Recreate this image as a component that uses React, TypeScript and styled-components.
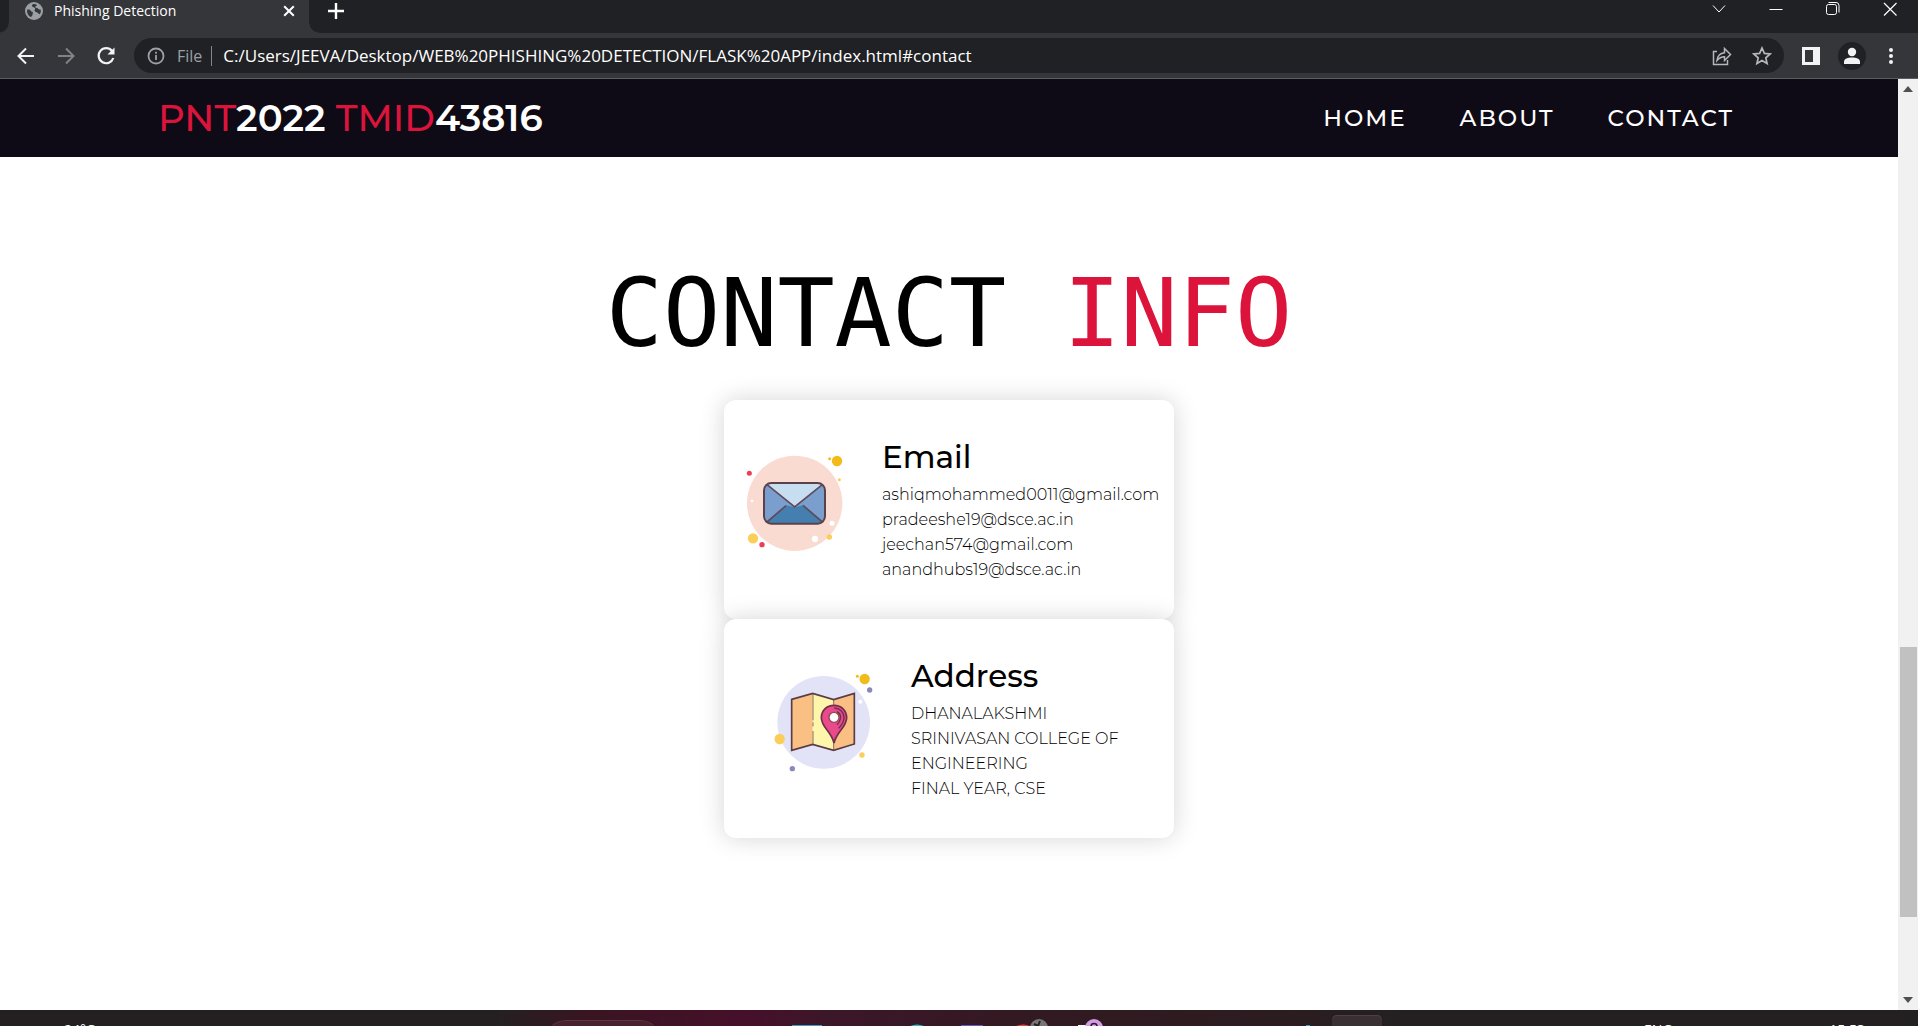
import React from "react";
import styled, { createGlobalStyle } from "styled-components";

const crimson = "#dc143c";
const uiFont = `"Segoe UI", "Open Sans", "Noto Sans", sans-serif`;
const siteFont = `Montserrat, Inter, "Open Sans", sans-serif`;

const GlobalStyle = createGlobalStyle`
  *, *::before, *::after { box-sizing: border-box; }
  body { margin: 0; background: #fff; overflow: hidden; }
  h1, h2, p, ul, address { margin: 0; padding: 0; }
`;

const Screen = styled.div`
  display: flex;
  flex-direction: column;
  height: 100vh;
  overflow: hidden;
  font-family: ${uiFont};
`;

/* Browser frame */
const TabStrip = styled.div`
  flex: none;
  display: flex;
  align-items: stretch;
  height: 33px;
  padding-left: 9px;
  background: #202124;
  color: #fff;
`;

const Tab = styled.div`
  position: relative;
  display: flex;
  align-items: center;
  gap: 11px;
  width: 300px;
  padding: 0 12px 12px 16px;
  background: #35363a;
  font-size: 14px;
  line-height: 20px;
  &::before,
  &::after {
    content: "";
    position: absolute;
    bottom: 0;
    width: 10px;
    height: 10px;
  }
  &::before {
    left: -10px;
    background: radial-gradient(circle at 0 0, #202124 9px, #35363a 10px);
  }
  &::after {
    right: -10px;
    background: radial-gradient(circle at 100% 0, #202124 9px, #35363a 10px);
  }
`;

const TabTitle = styled.span`
  flex: 1;
  white-space: nowrap;
`;

const IconButton = styled.button<{ $w?: number; $round?: boolean }>`
  flex: none;
  display: flex;
  align-items: center;
  justify-content: center;
  width: ${(p) => p.$w ?? 40}px;
  height: ${(p) => (p.$round ? "28px" : "22px")};
  margin-left: ${(p) => (p.$round ? "13px" : "0")};
  padding: 0;
  border: 0;
  border-radius: ${(p) => (p.$round ? "50%" : "0")};
  background: ${(p) => (p.$round ? "#202124" : "transparent")};
  color: inherit;
  svg {
    display: block;
  }
`;

const WindowControls = styled.div`
  display: flex;
  margin-left: auto;
  height: 17px;
  align-items: center;
`;

const Toolbar = styled.div`
  flex: none;
  display: flex;
  align-items: center;
  height: 46px;
  padding: 0 2px 0 6px;
  background: #35363a;
  border-bottom: 1px solid #5c5d60;
  color: #f1f3f4;
`;

const Omnibox = styled.div`
  flex: 1;
  display: flex;
  align-items: center;
  height: 35px;
  margin: 0 13px 0 8px;
  padding: 0 2px 0 13px;
  border-radius: 18px;
  background: #202124;
  color: #b4b8bc;
  font-size: 16px;
`;

const Scheme = styled.span`
  margin-left: 12px;
  padding-right: 9px;
  border-right: 1px solid #80868b;
  line-height: 20px;
  color: #9aa0a6;
`;

const Url = styled.input`
  flex: 1;
  min-width: 0;
  margin-left: 11px;
  padding: 0;
  border: 0;
  outline: 0;
  background: transparent;
  color: #fff;
  font: 17px/22px ${uiFont};
`;

/* Viewport of the page */
const Viewport = styled.div`
  flex: 1;
  min-height: 0;
  display: flex;
`;

const Page = styled.div`
  flex: 1;
  min-width: 0;
  overflow: hidden;
  background: #fff;
  color: #000;
  font-family: ${siteFont};
`;

const Header = styled.header`
  display: flex;
  align-items: center;
  justify-content: space-between;
  height: 78px;
  padding: 0 164px 0 158px;
  background: #0f0b16;
`;

const Brand = styled.a`
  color: #fff;
  font-size: 37px;
  font-weight: 600;
  line-height: 48px;
  text-decoration: none;
  white-space: nowrap;
`;

const Accent = styled.span<{ $weight?: number }>`
  color: ${crimson};
  font-weight: ${(p) => p.$weight ?? 400};
`;

const Nav = styled.nav`
  display: flex;
  gap: 53px;
`;

const NavLink = styled.a`
  color: #fff;
  font-size: 23px;
  font-weight: 500;
  line-height: 32px;
  letter-spacing: 2px;
  text-transform: uppercase;
  text-decoration: none;
`;

const Contact = styled.section`
  display: flex;
  flex-direction: column;
  align-items: center;
  padding-top: 100px;
`;

const Title = styled.h1`
  margin-bottom: 31px;
  font-family: "DejaVu Sans Mono", monospace;
  font-size: 95px;
  font-weight: 400;
  line-height: 112px;
  text-transform: uppercase;
  white-space: nowrap;
`;

const Card = styled.article<{ $indent: number }>`
  display: flex;
  align-items: center;
  width: 450px;
  padding: 38px 0 37px ${(p) => p.$indent}px;
  border-radius: 12px;
  background: #fff;
  box-shadow: 0 0 24px rgba(0, 0, 0, 0.17);
`;

const Picture = styled.div`
  flex: none;
  margin-right: 37px;
  padding-bottom: 14px;
  svg {
    display: block;
  }
`;

const CardTitle = styled.h2`
  margin-bottom: 6px;
  font-size: 31px;
  font-weight: 500;
  line-height: 38px;
`;

const Lines = styled.ul`
  list-style: none;
  font-size: 16px;
  font-weight: 300;
  line-height: 25px;
  white-space: nowrap;
`;

/* Scroll bar */
const ScrollBar = styled.div`
  flex: none;
  display: flex;
  flex-direction: column;
  width: 20px;
  background: #f1f1f1;
`;

const ScrollArrow = styled.button`
  display: flex;
  align-items: center;
  justify-content: center;
  height: 20px;
  padding: 0;
  border: 0;
  background: transparent;
`;

const ScrollTrack = styled.div`
  flex: 1;
  display: grid;
  grid-template-rows: 548fr 270fr 73fr;
  padding: 0 1px 0 2px;
`;

const ScrollThumb = styled.div`
  grid-row: 2;
  background: #c1c1c1;
`;

/* Task bar */
const TaskBar = styled.footer`
  flex: none;
  display: grid;
  grid-template-columns: 546fr 838px 534fr;
  height: 16px;
  overflow: hidden;
  background: linear-gradient(90deg, #242021 0%, #242021 26%, #3a1421 31%, #46102a 39%, #3c1629 43%, #311a21 55%, #2b1c20 67%, #242021 73%);
  color: #fff;
  font-size: 14px;
  line-height: 20px;
`;

const Weather = styled.div`
  padding: 10px 0 0 64px;
`;

const Tasks = styled.div`
  display: flex;
`;

const SearchPill = styled.div`
  flex: none;
  width: 114px;
  height: 40px;
  margin: 10px 119px 0 0;
  border-radius: 20px;
  border-top: 1px solid #5d3441;
  background: #48212e;
`;

const Slot = styled.div<{ $active?: boolean }>`
  flex: none;
  width: ${(p) => (p.$active ? 50 : 55)}px;
  height: 48px;
  margin: ${(p) => (p.$active ? "5px 0 0 3px" : "0")};
  padding-top: ${(p) => (p.$active ? "9px" : "0")};
  border-radius: 5px;
  background: ${(p) => (p.$active ? "#3a3033" : "transparent")};
  box-shadow: ${(p) => (p.$active ? "inset 0 1px #4b4244" : "none")};
  svg {
    display: block;
    margin: 0 auto;
  }
`;

const Tray = styled.div`
  display: flex;
  justify-content: space-between;
  width: 274px;
  margin-left: auto;
  padding: 10px 53px 0 0;
`;

const Globe = () => (
  <svg width="18" height="18" viewBox="0 0 18 18">
    <circle cx="9" cy="9" r="9" fill="#9aa0a6" />
    <path d="M2.5 7.2c2 .2 3 .8 3.4 1.7.4.8 1.7.6 2 1.5.3.8-.4 1.6-.5 2.5-.2 1-1 1.6-1.7 2.2C3.5 14 2 11.5 2 9zM8 2.2c1.6-.3 3 .1 4 .7-.3.9-1.3 1-1.8 1.7-.5.8.7 1.3 1.7 1.5 1.1.2 1.5 1.3 2.6 1.4l1.3.2c.2 1.5-.1 3.2-.9 4.5-.9-.1-1.5-.8-2.3-1.5-1-.8-2.7-.5-3-1.9-.2-1.1.9-1.6.6-2.5C9.8 5.3 7.5 5.2 7 4.2c-.2-.8.4-1.6 1-2z" fill="#35363a" />
  </svg>
);

const Stroke = ({ d, size = 20, width = 2, color = "currentColor" }: { d: string; size?: number; width?: number; color?: string }) => (
  <svg width={size} height={size} viewBox="0 0 20 20" fill="none" stroke={color} strokeWidth={width}>
    <path d={d} />
  </svg>
);

const EmailPicture = () => (
  <svg width="100" height="100" viewBox="30 39 300 300">
    <circle cx="179" cy="190" r="143" fill="#f9dbd2" />
    <circle cx="306" cy="63" r="15.5" fill="#f1bc19" />
    <circle cx="284" cy="56" r="4.5" fill="#f1bc19" />
    <circle cx="313" cy="119" r="4.5" fill="#fbcd59" />
    <circle cx="43" cy="100" r="7.5" fill="#ee3e54" />
    <circle cx="81" cy="314" r="8" fill="#ee3e54" />
    <circle cx="54" cy="295" r="15.5" fill="#fbcd59" />
    <circle cx="283" cy="291" r="8" fill="#fbcd59" />
    <circle cx="240" cy="297" r="9.5" fill="#fff" />
    <circle cx="291" cy="250" r="7.5" fill="#fff" />
    <circle cx="51" cy="183" r="4" fill="#fff" />
    <rect x="87" y="129" width="183" height="122" rx="22" fill="#7a9fce" />
    <path d="M98 244l56-48 25 6 25-6 56 48c-4 4-8 6-13 6H110c-5 0-9-2-12-6z" fill="#447fb0" />
    <path d="M98 134c4-3 8-4 13-4h136c5 0 9 1 13 4l-81 67z" fill="#c7def0" />
    <path d="M96 134l83 67 83-67M96 246l57-49M262 246l-58-50" fill="none" stroke="#5f4b5c" strokeWidth="5" />
    <rect x="87" y="129" width="183" height="122" rx="22" fill="none" stroke="#5b414b" strokeWidth="6" />
  </svg>
);

const MapPicture = () => (
  <svg width="100" height="100" viewBox="27 39 300 300">
    <circle cx="176" cy="190" r="139" fill="#e3e3f7" />
    <circle cx="299" cy="60" r="15.5" fill="#f1bc19" />
    <circle cx="277" cy="52" r="4.5" fill="#f1bc19" />
    <circle cx="314" cy="93" r="8" fill="#8889b9" />
    <circle cx="82" cy="329" r="8" fill="#8889b9" />
    <circle cx="44" cy="240" r="15.5" fill="#fbcd59" />
    <circle cx="291" cy="288" r="8" fill="#fbcd59" />
    <circle cx="286" cy="128" r="6" fill="#fff" />
    <path d="M80 121l63-18v153l-63 18zM206 122l62-20v153l-62 19z" fill="#fabf82" />
    <path d="M143 103l63 19v152l-63-18z" fill="#fef6aa" />
    <path d="M144 104v80M144 190v12M144 216v40M206 122v20M206 250v24" stroke="#8b6f60" strokeWidth="3" />
    <path d="M80 121l63-18 63 19 62-19v152l-62 19-63-18-63 18z" fill="none" stroke="#5b3b45" strokeWidth="5" />
    <path d="M207 139c-22 0-38 16-38 37 0 28 30 42 38 76 8-34 38-48 38-76 0-21-16-37-38-37z" fill="#e84a8a" stroke="#6f2e4b" strokeWidth="5" />
    <path d="M208 147c18 1 29 14 29 29 0 13-7 22-16 32M216 158c9 5 12 13 10 22-1 7-5 12-10 17" fill="none" stroke="#6f2e4b" strokeWidth="4" />
    <circle cx="207" cy="175" r="15" fill="#fff" stroke="#8b4a50" strokeWidth="4" />
  </svg>
);

const emails = ["ashiqmohammed0011@gmail.com", "pradeeshe19@dsce.ac.in", "jeechan574@gmail.com", "anandhubs19@dsce.ac.in"];
const addressLines = ["DHANALAKSHMI", "SRINIVASAN COLLEGE OF", "ENGINEERING", "FINAL YEAR, CSE"];

const BrowserFrame = () => (
  <>
    <TabStrip>
      <Tab>
        <Globe />
        <TabTitle>Phishing Detection</TabTitle>
        <IconButton $w={16} aria-label="Close tab">
          <Stroke size={16} width={2.5} d="M4 4l12 12M16 4L4 16" />
        </IconButton>
      </Tab>
      <IconButton $w={54} aria-label="New tab">
        <Stroke size={20} width={2.4} d="M10 2v16M2 10h16" />
      </IconButton>
      <WindowControls>
        <IconButton $w={57} aria-label="Search tabs"><Stroke width={1} d="M4 6.5l6 6.5 6-6.5" /></IconButton>
        <IconButton $w={57} aria-label="Minimize"><Stroke width={1} d="M3.5 10.5h13" /></IconButton>
        <IconButton $w={57} aria-label="Restore">
          <svg width="20" height="20" viewBox="0 0 20 20" fill="none" stroke="currentColor">
            <rect x="3.5" y="5.5" width="10" height="10" rx="2" />
            <path d="M5.5 3.5h7.5q3 0 3 3v7" />
          </svg>
        </IconButton>
        <IconButton $w={57} aria-label="Close"><Stroke width={1.2} d="M4 4l12.5 12.5M16.5 4L4 16.5" /></IconButton>
      </WindowControls>
    </TabStrip>
    <Toolbar>
      <IconButton aria-label="Back"><Stroke d="M18 10H3M10 2.5L2.5 10l7.5 7.5" /></IconButton>
      <IconButton aria-label="Forward"><Stroke color="#818286" d="M2 10h15M10 2.5l7.5 7.5-7.5 7.5" /></IconButton>
      <IconButton aria-label="Reload">
        <svg width="20" height="20" viewBox="0 0 20 20">
          <path d="M16 5A7.5 7.5 0 1 0 17.3 12" fill="none" stroke="currentColor" strokeWidth="2.2" />
          <path d="M18.5 1.5v7h-7z" fill="currentColor" />
        </svg>
      </IconButton>
      <Omnibox>
        <svg width="18" height="18" viewBox="0 0 18 18" fill="none" stroke="#9aa0a6" strokeWidth="1.8">
          <circle cx="9" cy="9" r="7.5" />
          <path d="M9 8v5M9 4.8v1.9" />
        </svg>
        <Scheme>File</Scheme>
        <Url aria-label="Address" readOnly value="C:/Users/JEEVA/Desktop/WEB%20PHISHING%20DETECTION/FLASK%20APP/index.html#contact" />
        <IconButton aria-label="Share">
          <svg width="20" height="20" viewBox="0 0 20 20" fill="none" stroke="currentColor" strokeWidth="1.5">
            <path d="M5 5.5H1.5v13h14V14" />
            <path d="M5 14.5c.5-4.5 3-7.3 7.5-7.8V2.5l6 6-6 6v-3.8C9.5 10.7 7 12 5 14.5z" />
          </svg>
        </IconButton>
        <IconButton aria-label="Bookmark">
          <Stroke width={1.7} d="M10 2l2.4 5.4 5.7.6-4.3 3.9 1.3 5.7L10 14.6l-5.1 3 1.3-5.7L1.9 8l5.7-.6z" />
        </IconButton>
      </Omnibox>
      <IconButton $w={28} aria-label="Side panel">
        <svg width="18" height="18" viewBox="0 0 18 18">
          <path d="M0 0h18v18H0zM3 3v12h8V3z" fill="currentColor" fillRule="evenodd" />
        </svg>
      </IconButton>
      <IconButton $w={28} $round aria-label="Profile">
        <svg width="18" height="18" viewBox="0 0 18 18" fill="currentColor">
          <circle cx="9" cy="5" r="4.2" />
          <path d="M1 17v-2.2C1 11.6 5 10.5 9 10.5s8 1.1 8 4.3V17z" />
        </svg>
      </IconButton>
      <IconButton $w={50} aria-label="Menu">
        <svg width="4" height="18" viewBox="0 0 4 18" fill="currentColor">
          <circle cx="2" cy="3" r="2" />
          <circle cx="2" cy="9" r="2" />
          <circle cx="2" cy="15" r="2" />
        </svg>
      </IconButton>
    </Toolbar>
  </>
);

const WindowsTaskBar = () => (
  <TaskBar>
    <Weather>24°C</Weather>
    <Tasks>
      <SearchPill />
      <Slot><svg width="30" height="16"><path d="M0 15h30v1H0z" fill="#3a9cc8" /></svg></Slot>
      <Slot />
      <Slot><svg width="30" height="16"><circle cx="15" cy="30" r="15.5" fill="#35b7c4" /></svg></Slot>
      <Slot><svg width="30" height="16"><path d="M4 15h22v1H4z" fill="#6a55c4" /></svg></Slot>
      <Slot>
        <svg width="46" height="16">
          <circle cx="19" cy="30" r="15.5" fill="#e0483a" />
          <circle cx="35" cy="18" r="9" fill="#77757a" />
          <path d="M30 14l4 2 2-5" stroke="#242021" strokeWidth="2" fill="none" />
        </svg>
      </Slot>
      <Slot>
        <svg width="46" height="16">
          <path d="M19 15h14v1H19z" fill="#fff" />
          <circle cx="35" cy="18" r="9" fill="#d79ae6" />
          <path d="M32 16.5a3 3 0 0 1 6 0" stroke="#222" strokeWidth="1.5" fill="none" />
        </svg>
      </Slot>
      <Slot />
      <Slot />
      <Slot />
      <Slot><svg width="30" height="16"><path d="M19 15h4v1h-4z" fill="#2f9fdb" /></svg></Slot>
      <Slot $active><svg width="30" height="16"><circle cx="15" cy="25" r="15" fill="#e0483a" /></svg></Slot>
    </Tasks>
    <Tray>
      <span>ENG</span>
      <span>15:53</span>
    </Tray>
  </TaskBar>
);

export default function App() {
  return (
    <Screen>
      <GlobalStyle />
      <BrowserFrame />
      <Viewport>
        <Page>
          <Header>
            <Brand href="#home">
              <Accent $weight={500}>PNT</Accent>2022 <Accent $weight={500}>TMID</Accent>43816
            </Brand>
            <Nav>
              <NavLink href="#home">Home</NavLink>
              <NavLink href="#about">About</NavLink>
              <NavLink href="#contact">Contact</NavLink>
            </Nav>
          </Header>
          <Contact id="contact">
            <Title>Contact <Accent>Info</Accent></Title>
            <Card $indent={21}>
              <Picture><EmailPicture /></Picture>
              <div>
                <CardTitle>Email</CardTitle>
                <Lines>{emails.map((line) => <li key={line}>{line}</li>)}</Lines>
              </div>
            </Card>
            <Card $indent={50}>
              <Picture><MapPicture /></Picture>
              <div>
                <CardTitle>Address</CardTitle>
                <Lines>{addressLines.map((line) => <li key={line}>{line}</li>)}</Lines>
              </div>
            </Card>
          </Contact>
        </Page>
        <ScrollBar>
          <ScrollArrow aria-label="Scroll up">
            <svg width="10" height="6"><path d="M0 6l5-6 5 6z" fill="#505050" /></svg>
          </ScrollArrow>
          <ScrollTrack><ScrollThumb /></ScrollTrack>
          <ScrollArrow aria-label="Scroll down">
            <svg width="10" height="6"><path d="M0 0l5 6 5-6z" fill="#505050" /></svg>
          </ScrollArrow>
        </ScrollBar>
      </Viewport>
      <WindowsTaskBar />
    </Screen>
  );
}
